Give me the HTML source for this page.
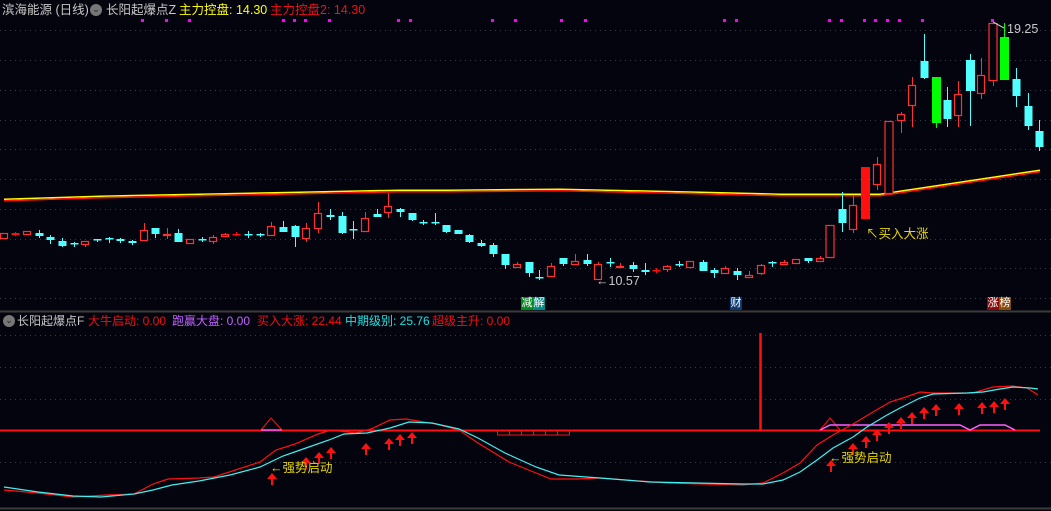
<!DOCTYPE html><html><head><meta charset="utf-8"><style>
body{margin:0;background:#04040e;width:1051px;height:511px;overflow:hidden;position:relative;font-family:"Liberation Sans","Noto Sans CJK SC",sans-serif}
.t{position:absolute;font-size:12.5px;white-space:nowrap;line-height:14px}
.b{font-size:12px}
.tag{position:absolute;top:297px;height:13px;width:12px;font-size:11px;line-height:13px;color:#fff;text-align:center}
</style></head><body>
<svg id="s" width="1051" height="511" style="position:absolute;left:0;top:0"></svg>
<div class="t" style="left:2px;top:3px;color:#c8c8c8">滨海能源 (日线)</div>
<div style="position:absolute;left:90px;top:4px;width:12px;height:12px;border-radius:50%;background:#777;color:#222;font-size:9px;text-align:center;line-height:11px">⌄</div>
<div class="t" style="left:106px;top:3px;color:#c8c8c8">长阳起爆点Z</div>
<div class="t" style="left:179px;top:3px;color:#ffff00">主力控盘: 14.30</div>
<div class="t" style="left:270px;top:3px;color:#f01010">主力控盘2: 14.30</div>
<div class="t" style="left:1007px;top:22px;color:#c8c8c8">19.25</div>
<div class="t" style="left:596px;top:274px;color:#c8c8c8">←10.57</div>
<div class="t" style="left:866px;top:227px;color:#e8d800">↖买入大涨</div>
<div class="tag" style="left:521px;background:#008a20">减</div><div class="tag" style="left:533px;background:#008a8a">解</div>
<div class="tag" style="left:730px;background:#0a3a70">财</div>
<div class="tag" style="left:987px;background:#8a0a0a">涨</div><div class="tag" style="left:999px;background:#8a4a0a">榜</div>
<div style="position:absolute;left:3px;top:315px;width:12px;height:12px;border-radius:50%;background:#777;color:#222;font-size:9px;text-align:center;line-height:11px">⌄</div>
<div class="t b" style="left:17px;top:314px;color:#c8c8c8">长阳起爆点F</div>
<div class="t b" style="left:88px;top:314px;color:#f01010">大牛启动: 0.00</div>
<div class="t b" style="left:172px;top:314px;color:#c060ff">跑赢大盘: 0.00</div>
<div class="t b" style="left:257px;top:314px;color:#f01010">买入大涨: 22.44</div>
<div class="t b" style="left:345px;top:314px;color:#20e0e0">中期级别: 25.76</div>
<div class="t b" style="left:432px;top:314px;color:#f01010">超级主升: 0.00</div>
<div class="t" style="left:270px;top:461px;color:#e8d800">←强势启动</div>
<div class="t" style="left:829px;top:451px;color:#e8d800">←强势启动</div>
<script>
var s='';
function L(x1,y1,x2,y2,c,w,d){s+='<line x1="'+x1+'" y1="'+y1+'" x2="'+x2+'" y2="'+y2+'" stroke="'+c+'" stroke-width="'+(w||1)+'"'+(d?' stroke-dasharray="'+d+'"':'')+'/>';}
[30,60,90,120,149,179,209,239,268,298,335,367,399,462].forEach(function(y){L(0,y+.5,1051,y+.5,'#3a3a46',1,'1 4');});
L(0,311.5,1051,311.5,'#3a3a3a',2);L(0,508.5,1051,508.5,'#3a3a3a',2);
[142,166,189,283,294,305,329,398,410,492,515,561,585,724,736,829,841,864,875,887,899,922,992].forEach(function(x){s+='<rect x="'+(x-1)+'" y="19" width="3" height="3" fill="#ff00ff"/>';});
var ma=[[4,200],[100,197],[200,195],[300,193],[400,191],[450,191],[560,190],[700,193],[780,195],[880,195],[940,186],[1000,177],[1040,171]];
var p=ma.map(function(a){return a[0]+','+a[1]}).join(' ');
s+='<polyline points="'+p+'" fill="none" stroke="#ffff00" stroke-width="1.5" transform="translate(0,-0.8)"/>';
s+='<polyline points="'+p+'" fill="none" stroke="#ff1010" stroke-width="1.5" transform="translate(0,0.8)"/>';
var C=[[4,233,238,233,238,'r'],[15,233,235,232,236,'R'],[27,231,234,231,234,'r'],[39,233,236,230,238,'c'],[50,237,240,235,244,'c'],[62,241,246,238,247,'c'],[74,243,244,242,247,'c'],[85,241,244,241,247,'r'],[97,239,240,239,242,'c'],[109,238,239,237,243,'c'],[120,239,241,238,243,'c'],[132,241,243,240,245,'c'],[144,230,240,223,241,'r'],[155,228,234,228,238,'c'],[167,234,235,228,239,'r'],[178,233,242,229,242,'c'],[190,239,243,239,244,'r'],[202,239,240,237,242,'c'],[213,237,241,235,244,'r'],[225,234,236,233,237,'r'],[236,234,235,232,236,'R'],[248,234,235,231,238,'c'],[260,234,235,233,237,'c'],[271,226,235,222,236,'r'],[283,227,232,221,232,'c'],[295,226,237,225,247,'c'],[306,228,238,223,242,'r'],[318,213,228,202,233,'r'],[330,215,217,209,220,'c'],[342,216,233,212,234,'c'],[353,229,230,221,239,'c'],[365,218,231,212,232,'r'],[377,214,217,209,217,'c'],[388,206,212,193,218,'r'],[400,209,212,208,217,'c'],[412,213,220,213,221,'c'],[423,222,223,220,225,'c'],[435,222,223,213,225,'c'],
[446,225,232,225,233,'c'],[458,230,234,230,234,'c'],[469,235,242,234,243,'c'],[481,243,246,240,247,'c'],[493,245,254,243,257,'c'],[505,254,265,254,269,'c'],[517,264,267,262,268,'r'],[529,262,273,262,277,'c'],[539,277,278,270,280,'c'],[551,266,276,263,276,'r'],[563,258,264,258,266,'c'],[575,261,264,254,264,'r'],[587,260,264,254,266,'c'],[598,264,279,262,279,'r'],[610,262,263,258,267,'c'],[620,266,267,263,267,'r'],[633,265,269,262,272,'c'],[645,270,272,263,275,'c'],[656,270,271,268,273,'R'],[667,266,269,265,272,'r'],[679,264,265,261,267,'c'],[690,261,267,261,268,'r'],[703,262,271,260,271,'c'],[714,270,273,268,278,'c'],[725,268,273,266,274,'r'],[737,271,275,268,280,'c'],[749,275,277,271,278,'r'],[761,265,273,264,275,'r'],[772,262,263,261,267,'c'],[784,262,264,260,265,'r'],[796,259,263,259,264,'r'],[808,258,261,258,263,'c'],[820,258,261,256,262,'r'],[830,225,257,225,258,'r'],[842,209,223,192,232,'c'],[853,205,229,195,233,'r'],[865,167,219,167,219,'R'],[877,164,184,157,190,'r'],[889,121,193,121,193,'r'],[901,114,120,112,133,'r'],[912,85,105,77,127,'r'],[924,61,78,34,79,'c'],[936,77,123,77,128,'g'],[947,100,119,87,127,'c'],[958,94,115,81,127,'r'],[970,60,91,54,126,'c'],[981,75,93,58,99,'r'],[993,23,80,23,86,'r'],[1004,37,80,23,80,'g'],[1016,79,96,68,107,'c'],[1028,106,126,93,130,'c'],[1039,131,147,120,151,'c']];
C.forEach(function(k){var x=k[0],t=k[1],b=k[2],ty=k[5];var big=(b-t>30);var w=big?9:8;
 var col={r:'#ff3030',R:'#ff1010',c:'#50ffff',g:'#00ff00'}[ty];
 L(x+.5,k[3],x+.5,k[4],col,1);
 if(ty=='r'){s+='<rect x="'+(x-w/2+.5)+'" y="'+(t+.5)+'" width="'+(w-1)+'" height="'+Math.max(b-t,1)+'" fill="#04040e" stroke="'+col+'" stroke-width="1.2"/>';}
 else{var hh=Math.max(b-t,1.5);s+='<rect x="'+(x-w/2+.5)+'" y="'+t+'" width="'+w+'" height="'+hh+'" fill="'+col+'"/>';}
});
L(993,22,1004,28,'#c8c8c8',1);
L(0,430.5,1040,430.5,'#ff1010',2);
L(760.5,333,760.5,430,'#ff1010',2.5);
for(var i=0;i<6;i++)s+='<rect x="'+(497.5+i*12)+'" y="430.5" width="12" height="4.5" fill="none" stroke="#ff1010" stroke-width="1"/>';
s+='<polyline points="261,430 271,418 282,430" fill="none" stroke="#ff1010"/>';L(261,430,282,430,'#e060ff',1.5);
s+='<polyline points="820,430 830,418 840,430" fill="none" stroke="#ff1010"/>';
s+='<polyline points="820,430 830,425 960,425 970,430 980,425 1005,425 1015,430" fill="none" stroke="#ff60ff" stroke-width="1.5"/>';
var cy=[[4,487],[38,492],[73,496],[101,497],[134,494],[153,490],[172,485],[199,481],[230,475],[260,467],[283,456],[306,448],[329,440],[344,434],[367,433],[390,428],[409,422],[432,423],[459,429],[478,438],[505,453],[536,467],[559,475],[600,478],[650,482],[743,484],[763,484],[783,480],[800,472],[817,460],[833,448],[853,437],[867,427],[887,415],[900,408],[920,398],[933,394],[967,393],[983,392],[1000,389],[1013,387],[1030,388],[1038,389]];
var rd=[[4,490],[38,493],[73,497],[107,495],[134,494],[153,484],[168,479],[199,478],[214,477],[260,462],[276,450],[295,444],[318,434],[331,430],[356,433],[371,429],[390,420],[406,419],[436,424],[459,430],[478,443],[509,462],[536,473],[551,479],[578,479],[600,478],[667,483],[743,485],[763,483],[783,473],[800,463],[817,445],[833,435],[853,424],[873,412],[890,402],[903,398],[920,392],[933,393],[973,393],[993,387],[1013,386],[1027,388],[1038,395]];
s+='<polyline points="'+rd.join(' ')+'" fill="none" stroke="#ff1010" stroke-width="1.2"/>';
s+='<polyline points="'+cy.join(' ')+'" fill="none" stroke="#40f0f0" stroke-width="1.2"/>';
var ar=[[272,473],[306,457],[319,452],[331,447],[366,443],[389,438],[400,434],[412,432],[831,460],[853,443],[866,436],[877,429],[889,422],[901,417],[912,412],[924,407],[936,404],[959,403],[982,402],[994,401],[1005,398]];
ar.forEach(function(a){var x=a[0],y=a[1];s+='<polygon points="'+x+','+y+' '+(x-5)+','+(y+6)+' '+(x+5)+','+(y+6)+'" fill="#ff1010"/>';L(x,y+5,x,y+12,'#ff1010',2);});
document.getElementById('s').innerHTML=s;
</script>
</body></html>
